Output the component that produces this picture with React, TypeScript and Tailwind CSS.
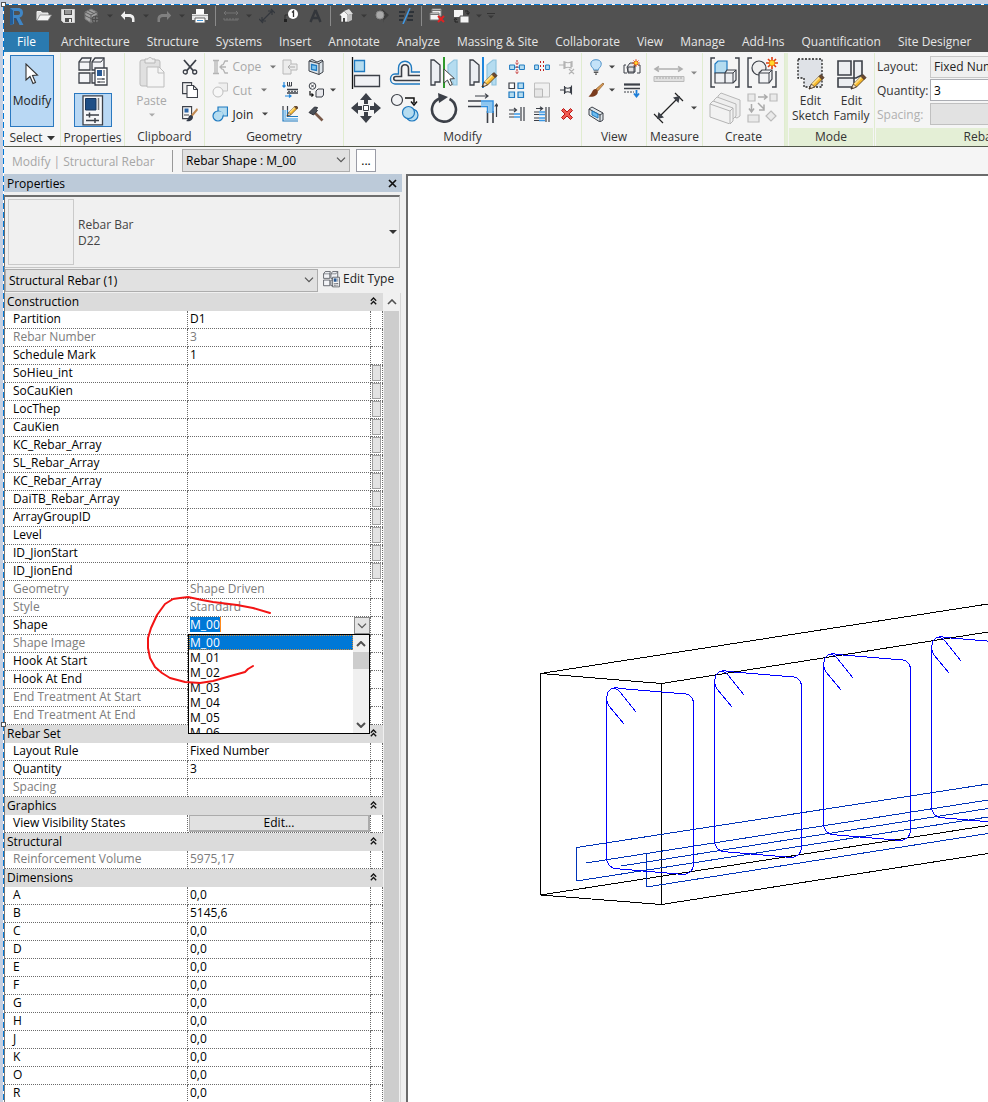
import type { ReactNode } from "react";

const INK = "#3c4048";
const BLUE = "#1f7ac0";
const SKY = "#b5dcf0";
const MUTE = "#b4b4b4";

function Icon({ w = 16, h = 16, children }: { w?: number; h?: number; children: ReactNode }) {
  return (
    <svg width={w} height={h} viewBox={`0 0 ${w} ${h}`} fill="none" className="block shrink-0" aria-hidden="true">
      {children}
    </svg>
  );
}

function Caret({ color = "#444" }: { color?: string }) {
  return (
    <Icon w={6} h={4}>
      <path d="M0 0.5h6L3 3.5z" fill={color} />
    </Icon>
  );
}

function Chevron() {
  return (
    <Icon w={10} h={6}>
      <path d="M1 0.7l4 4 4-4" stroke="#555" strokeWidth="1.2" />
    </Icon>
  );
}

function Pencil({ x, y }: { x: number; y: number }) {
  return (
    <g transform={`translate(${x} ${y})`}>
      <path d="M0 15l2.500-5 9-9 3 3-9 9z" fill="#f6b82c" stroke="#5a4020" strokeWidth="0.9" />
      <path d="M2.500 10l9-9 1.200 1.200-9 9z" fill="#ffe08a" />
      <path d="M10 2.500L12 0.500l3 3-2 2z" fill="#6b4a34" stroke="#3b2a20" strokeWidth="0.700" />
      <path d="M0 15l2.500-5 3 3z" fill="#f7e6cc" stroke="#3b2a20" strokeWidth="0.700" />
      <path d="M0 15l1-2 1 1z" fill="#222" />
    </g>
  );
}

function Burst({ x, y }: { x: number; y: number }) {
  return (
    <g transform={`translate(${x} ${y})`}>
      <path d="M0-6v12M-6 0h12M-4-4l8 8M4-4l-8 8" stroke="#e03a10" strokeWidth="1.600" />
      <circle r="2.800" fill="#ffd92e" stroke="#f08a10" />
    </g>
  );
}

function Logo() {
  return (
    <Icon w={15} h={19}>
      <path d="M1 1l8 0c4 0 5 2.500 5 5 0 2.300-1.300 4-3.500 4.500L14.500 18h-4L7 11H5l0 6-4 1z" fill="#3f86c6" />
      <path d="M1 1l3 2.500V17l-3 1z" fill="#235d98" />
      <path d="M5 4h4c1.500 0 2 1 2 2s-.6 2-2 2H5z" fill="#515151" />
      <path d="M5 11l2 0 3.500 7L8 15z" fill="#1f4f88" />
    </Icon>
  );
}

const quickIcons: Record<string, ReactNode> = {
  open: (
    <Icon w={16} h={12}>
      <path d="M1 10V1.500h4L6 3h6v2" fill="#ddd" stroke="#eee" />
      <path d="M1 10.500L4 5h11.500L12 10.500z" fill="#f4f4f4" stroke="#888" strokeWidth="0.800" />
    </Icon>
  ),
  save: (
    <Icon w={14} h={14}>
      <path d="M.5.5h13v13h-11l-2-2z" fill="#e8e8e8" stroke="#ccc" />
      <path d="M3 1h8v5H3zM4 9h7v4H4z" fill="#515151" />
      <path d="M4 2h6M4 4h6" stroke="#ddd" />
      <path d="M8 10h2v3H8z" fill="#eee" />
    </Icon>
  ),
  cube: (
    <Icon w={16} h={16}>
      <path d="M1 4l6-3 6 3v7l-6 4-6-4z" fill="#a0a0a0" stroke="#777" />
      <path d="M1 4l6 3 6-3M7 7v8M4 2.500l6 3M1 7.500l6 3 6-3" stroke="#5c5c5c" />
      <circle cx="11.500" cy="11.500" r="3.500" fill="#707070" stroke="#505050" />
      <path d="M11.500 8v7M8 11.500h7" stroke="#4c4c4c" />
    </Icon>
  ),
  undo: (
    <Icon w={16} h={13}>
      <path d="M5 1v3h4c4 0 5.500 2.500 5.500 5v3h-2.500V9.500C12 8 11 7 9 7H5v3L.8 5.500z" fill="#f0f0f0" />
    </Icon>
  ),
  redo: (
    <Icon w={16} h={13}>
      <path d="M11 1v3H7C3 4 1.500 6.500 1.500 9v3H4V9.500C4 8 5 7 7 7h4v3l4.200-4.500z" fill="#808080" />
    </Icon>
  ),
  print: (
    <Icon w={16} h={14}>
      <path d="M4 0h8v5H4z" fill="#fff" />
      <path d="M0 5h16v6H0z" fill="#e8e8e8" />
      <path d="M0 6.500h16" stroke="#aaa" />
      <path d="M3 9h10v5H3z" fill="#fff" stroke="#666" />
      <path d="M5 11.500h6" stroke="#3c94d8" />
    </Icon>
  ),
  ruler: (
    <Icon w={16} h={12}>
      <path d="M1 3h14M3 1L1 3l2 2M13 1l2 2-2 2M1 8v2h14V8M4 8v2M7 8v2M10 8v2M13 8v2" stroke="#747474" />
    </Icon>
  ),
  dim: (
    <Icon w={16} h={16}>
      <path d="M3 13L13 3M0 11l4 4M12 1l4 4M3 13l0-4M3 13l4 0M13 3H9M13 3v4" stroke="#33373d" strokeWidth="1.200" />
    </Icon>
  ),
  tag: (
    <Icon w={16} h={14}>
      <circle cx="10" cy="5" r="5" fill="#fff" />
      <path d="M9 3.500L10.500 2v6" stroke="#333" strokeWidth="1.300" />
      <path d="M5 6H2v5" stroke="#2c2c2c" />
      <path d="M1 10h3v3H1z" fill="#222" />
    </Icon>
  ),
  text: (
    <Icon w={13} h={14}>
      <path d="M6.500 1L1.500 13M6.500 1l5 12M3.500 9h6" stroke="#33363b" strokeWidth="2.400" />
    </Icon>
  ),
  house: (
    <Icon w={16} h={14}>
      <path d="M1 6l5-4 4 4v7H3V7z" fill="#f5f5f5" stroke="#444" strokeWidth="0.600" />
      <path d="M6 2l5-2 4 5-5 1z" fill="#ddd" />
      <path d="M10 6l4-1v6l-4 2z" fill="#bcbcbc" />
      <path d="M5 9h2v4H5z" fill="#444" />
    </Icon>
  ),
  section: (
    <Icon w={16} h={14}>
      <path d="M8 0l7 6-5 5v3z" fill="#3c3c3c" />
      <circle cx="6" cy="6" r="4" fill="#aaa" stroke="#888" />
    </Icon>
  ),
  thin: (
    <Icon w={17} h={16}>
      <path d="M1 4h6M1 8h5M1 12h4M11 4h5M10 8h5M9 12h6" stroke="#2d3238" strokeWidth="2" />
      <path d="M12 0L5 16" stroke="#3f9ae8" strokeWidth="1.500" />
    </Icon>
  ),
  closeWin: (
    <Icon w={18} h={16}>
      <path d="M4 1h9v7H4z" fill="#eee" stroke="#888" />
      <path d="M2 5h9v7H2z" fill="#f5f5f5" stroke="#777" />
      <path d="M2 6.500h9M4 2.500h9" stroke="#777" />
      <path d="M10 8l6 6M16 8l-6 6" stroke="#e02222" strokeWidth="2" />
    </Icon>
  ),
  switchWin: (
    <Icon w={17} h={16}>
      <path d="M1 2h9v7H1z" fill="#f4f4f4" />
      <path d="M7 8h9v7H7z" fill="#f4f4f4" stroke="#555" />
      <path d="M12 3h3v3M13 4.500L15 6.500 16.500 4.500M5 14H2v-3M1 12l1.500-2L4 12" stroke="#222" />
    </Icon>
  ),
};

type Quick = { name: string; icon?: string; kind?: "caret" | "sep" | "more" };
const quick: Quick[] = [
  { name: "Open", icon: "open" },
  { name: "Save", icon: "save" },
  { name: "Synchronize", icon: "cube" },
  { name: "Synchronize options", kind: "caret" },
  { name: "Undo", icon: "undo" },
  { name: "Undo history", kind: "caret" },
  { name: "Redo", icon: "redo" },
  { name: "Redo history", kind: "caret" },
  { name: "Print", icon: "print" },
  { name: "s1", kind: "sep" },
  { name: "Measure", icon: "ruler" },
  { name: "Measure options", kind: "caret" },
  { name: "Aligned dimension", icon: "dim" },
  { name: "Tag", icon: "tag" },
  { name: "Text", icon: "text" },
  { name: "s2", kind: "sep" },
  { name: "3D view", icon: "house" },
  { name: "3D view options", kind: "caret" },
  { name: "Section", icon: "section" },
  { name: "Thin lines", icon: "thin" },
  { name: "s3", kind: "sep" },
  { name: "Close hidden windows", icon: "closeWin" },
  { name: "Switch windows", icon: "switchWin" },
  { name: "Switch windows options", kind: "caret" },
  { name: "Customize toolbar", kind: "more" },
];

function QuickBar() {
  return (
    <div className="flex h-[27px] items-start pt-px">
      <button aria-label="Application menu" className="mr-1 flex h-5 w-6 items-center justify-center">
        <Logo />
      </button>
      {quick.map((q) => {
        if (q.kind === "sep")
          return (
            <div key={q.name} className="flex h-5 w-[7px] justify-center">
              <div className="w-px bg-[#8a8a8a]" />
            </div>
          );
        if (q.kind)
          return (
            <button key={q.name} aria-label={q.name} className="flex h-5 w-3 flex-col items-center justify-center gap-px">
              {q.kind === "more" && <span className="h-px w-2 bg-[#333]" />}
              <Caret color="#383838" />
            </button>
          );
        return (
          <button key={q.name} aria-label={q.name} className="flex h-5 w-6 items-center justify-center">
            {quickIcons[q.icon!]}
          </button>
        );
      })}
    </div>
  );
}

const tabs = [
  "Architecture", "Structure", "Systems", "Insert", "Annotate", "Analyze", "Massing & Site",
  "Collaborate", "View", "Manage", "Add-Ins", "Quantification", "Site Designer",
];

function Tabs() {
  return (
    <nav className="flex h-5 gap-[17px] whitespace-nowrap text-[12px] leading-5 text-[#e6e6e6]">
      <a href="#file" className="-mr-[5px] w-[45px] shrink-0 bg-[#2a7ab0] text-center text-white">File</a>
      {tabs.map((t) => (
        <a key={t} href="#tab" className="shrink-0">{t}</a>
      ))}
    </nav>
  );
}

function Panel({ title, className, tinted, caret, children }: {
  title: string; className: string; tinted?: boolean; caret?: boolean; children: ReactNode;
}) {
  return (
    <section className={`flex shrink-0 flex-col border-r border-[#e0ecd0] ${className}`}>
      <div className="flex h-[74px] justify-center pt-[2px]">{children}</div>
      <h2 className={`mt-[2px] flex h-[18px] items-center justify-center gap-1 text-[12px] text-[#333] ${tinted ? "mx-px bg-[#e4efd6]" : ""}`}>
        {title}
        {caret && (
          <Icon w={8} h={5}><path d="M0 0h8L4 4.500z" fill="#333" /></Icon>
        )}
      </h2>
    </section>
  );
}

function Tool({ label, className, children }: { label: string; className?: string; children: ReactNode }) {
  return (
    <button aria-label={label} className={`flex items-center justify-center ${className ?? ""}`}>
      {children}
    </button>
  );
}

function Building({ w = 30 }: { w?: number }) {
  return (
    <svg width={w} height={w} viewBox="0 0 30 30" fill="none" className="block shrink-0" aria-hidden="true">
      <path d="M1 5l3-4h9l-1 4v8H1zM14 5l3-4h9v12H14zM1 16h11v10H1zM14 16h9v10h-9z" fill="#f3f4f7" stroke={INK} strokeWidth="1.300" />
      <path d="M1 5h11M14 5h9l3-4" stroke={INK} strokeWidth="1" />
      <path d="M17 11h12v17H17z" fill="#fff" stroke={INK} strokeWidth="1.300" />
      <path d="M19 13h5v6h-5z" fill="#2a5a94" />
      <path d="M26 13v6M19 22h8M19 25h8M25 21v2M21 24v2" stroke={INK} />
    </svg>
  );
}

const G = {
  cursor: (
    <Icon w={14} h={22}>
      <path d="M1 1v16l4-3.500 3 7 2.500-1-3-7 5-.5z" fill="#fff" stroke="#333" strokeWidth="1.100" />
    </Icon>
  ),
  props: (
    <Icon w={22} h={31}>
      <path d="M1 .8h19.500v29H1z" fill="#f6f7f9" stroke={INK} strokeWidth="1.300" />
      <path d="M3.500 3.500h10.500v11.500H3.500z" fill="#1f4f86" stroke="#18365c" />
      <path d="M16.500 3v12" stroke="#777" strokeWidth="1.500" />
      <path d="M4 20h13M4 25.500h13M7.500 17.500v5M13 23v5" stroke={INK} strokeWidth="1.500" />
    </Icon>
  ),
  paste: (
    <Icon w={26} h={32}>
      <rect x="1" y="3" width="20" height="26" rx="2" fill="#e0e0e0" stroke="#bbb" />
      <path d="M6 2h3c0-2 4-2 4 0h3v4H6z" fill="#eee" stroke="#b8b8b8" />
      <path d="M8 10h12l5 5v15H8z" fill="#f5f5f5" stroke="#bdbdbd" />
      <path d="M19 10v6h6" stroke="#bdbdbd" />
    </Icon>
  ),
  cut: (
    <Icon>
      <path d="M2 1l9.500 11M14 1L4.500 12" stroke={INK} strokeWidth="1.800" />
      <circle cx="3.300" cy="13" r="2" stroke={INK} strokeWidth="1.300" />
      <circle cx="12.700" cy="13" r="2" stroke={INK} strokeWidth="1.300" />
    </Icon>
  ),
  copy: (
    <Icon>
      <path d="M.6.600h9v11h-9z" fill="#eee" stroke={INK} strokeWidth="1.100" />
      <path d="M5 3.500h6.500l4 4v8H5z" fill="#fff" stroke={INK} strokeWidth="1.100" />
      <path d="M11.500 3.500v4h4" stroke={INK} />
    </Icon>
  ),
  match: (
    <Icon>
      <path d="M.6.600h9v12h-9z" fill="#f8f8f8" stroke={INK} strokeWidth="1.100" />
      <path d="M2.500 2.500h4v4h-4z" fill="#2c66a8" />
      <path d="M2 9h5" stroke={INK} />
      <path d="M15 2L9 9l1.500 1.500L16 4z" fill="#c08850" />
      <path d="M9 9c-3 0-2 4-5 6 4 1 7-1 7-4.500z" fill="#333b4a" />
    </Icon>
  ),
  cope: (
    <Icon>
      <path d="M1 1.500h6M1 14.500h6M3 2v12M5 2v12M16 2h-3l-2 4M16 14h-3l-2-4M14 8H8M10.500 5.500L8 8l2.500 2.500" stroke={MUTE} strokeWidth="1.300" />
    </Icon>
  ),
  cutG: (
    <Icon>
      <path d="M6.500 1h9v8H11" fill="#eee" stroke="#c4c4c4" />
      <circle cx="6" cy="10" r="5" fill="#f7f7f7" stroke="#c0c0c0" />
    </Icon>
  ),
  join: (
    <Icon>
      <path d="M6 1h9.500v9H6z" fill={SKY} stroke={BLUE} strokeWidth="1.200" />
      <circle cx="6" cy="10" r="5" fill={SKY} stroke={BLUE} strokeWidth="1.200" />
      <path d="M6.500 5.500h3.500a5 5 0 0 1 1 4H6.500z" fill={SKY} />
    </Icon>
  ),
  joinRoof: (
    <Icon>
      <path d="M1 1h8v4h6v6H9v4H1z" fill="#ececec" stroke="#b8b8b8" />
      <path d="M13 8H6M8.500 5.500L6 8l2.500 2.500" stroke="#aaa" />
    </Icon>
  ),
  cope3d: (
    <Icon>
      <path d="M1 2l3-1.500L9 3l5-2 1 1v11l-4 2.500L1 12z" fill="#dce4ea" stroke={INK} />
      <path d="M1 2l10 2.500 4-2.500M11 4.500v11" stroke={INK} />
      <path d="M3.500 5.500l5 1v5l-5-1z" fill="#7cc4ee" stroke={BLUE} strokeWidth="1.300" />
    </Icon>
  ),
  split: (
    <Icon>
      <path d="M2 0v5M.5 3.500L2 5.200 3.500 3.500M3 14h6M7 12.500L9 14l-2 1.500" stroke="#1f86dc" strokeWidth="1.200" />
      <path d="M5.500 0v4h4V0M7.500 0v4" stroke={INK} />
      <path d="M5 7.500h11M5 11h11" stroke={INK} strokeWidth="1.300" />
      <path d="M6 9.300h10" stroke={INK} strokeDasharray="2 1" />
    </Icon>
  ),
  demolishBox: (
    <Icon>
      <circle cx="4.500" cy="4" r="3.300" fill="#fff" stroke={INK} />
      <path d="M3 2.500l3 3M6 2.500l-3 3" stroke={INK} />
      <path d="M8 9l2-2h5.500v6L14 15H8z" fill="#e8e8ec" stroke={INK} />
      <path d="M2 9v4h3M3.500 11.500L5.200 13l-1.700 1.700" stroke="#111" strokeWidth="1.200" />
    </Icon>
  ),
  wallJoin: (
    <Icon>
      <path d="M1 4v11h15M5.500 4v6.500H16" stroke={BLUE} strokeWidth="1.200" />
      <path d="M3.200 4v9H16" stroke="#8cc6f0" strokeWidth="2" />
      <path d="M1 0v4M5.500 0v4" stroke={INK} strokeWidth="1.200" />
      <g transform="translate(5 -1) scale(.74)"><Pencil x={0} y={0} /></g>
    </Icon>
  ),
  hammer: (
    <Icon>
      <path d="M6 6l8.500 8.500" stroke="#7a5a4a" strokeWidth="2.600" />
      <path d="M1 6.500L6.500 1l3 .5-1 2 1 1-4 4.500z" fill="#4b4f57" stroke="#2e3138" />
    </Icon>
  ),
  align: (
    <Icon w={30} h={32}>
      <path d="M1.500 0v32" stroke="#111" strokeWidth="1.300" />
      <path d="M3.500 3.500h10v11h-10z" fill={SKY} stroke={BLUE} strokeWidth="1.300" />
      <path d="M3.500 18.500h25v11h-25z" fill="#f0f1f4" stroke={INK} strokeWidth="1.300" />
    </Icon>
  ),
  offset: (
    <Icon w={32} h={28}>
      <path d="M31 25H6c-6 0-6-10 0-10h3.500V9c0-9 13-9 13 0v4H31" stroke={BLUE} strokeWidth="1.400" />
      <path d="M31 21.500H7c-3 0-3-4 0-4h5.500V9.500c0-5 7-5 7 0v7H31" stroke={INK} strokeWidth="1.600" />
    </Icon>
  ),
  mirrorPick: (
    <Icon w={30} h={31}>
      <path d="M2 3l3 0 6 5v17H6v3H2z" fill="#eceef2" stroke={INK} strokeWidth="1.300" />
      <path d="M28 3h-3l-6 5v17h5v3h4z" fill={SKY} stroke="#8fc4de" strokeWidth="1.200" />
      <path d="M15 0v31" stroke="#2f9a2c" strokeWidth="2" />
      <path d="M15 12v14l3.500-3 2.500 5.500 2.300-1-2.400-5.500 4.500-.4z" fill="#fff" stroke="#444" />
    </Icon>
  ),
  mirrorDraw: (
    <Icon w={30} h={31}>
      <path d="M2 3l3 0 6 5v17H6v3H2z" fill="#eceef2" stroke={INK} strokeWidth="1.300" />
      <path d="M28 3h-3l-6 5v17h5v3h4z" fill={SKY} stroke="#8fc4de" strokeWidth="1.200" />
      <path d="M15 0v31" stroke="#1f86dc" strokeWidth="2" />
      <Pencil x={14} y={15} />
    </Icon>
  ),
  move: (
    <Icon w={30} h={30}>
      <path d="M15 0l6 7h-4v4h-4V7H9zM15 30l-6-7h4v-4h4v4h4zM0 15l7-6v4h4v4H7v4zM30 15l-7 6v-4h-4v-4h4V9z" fill={INK} />
      <path d="M12.500 12.500h5v5h-5z" fill="#fff" stroke={INK} />
    </Icon>
  ),
  copyEl: (
    <Icon w={30} h={30}>
      <circle cx="7" cy="7" r="5.500" fill="#f2f3f5" stroke={INK} strokeWidth="1.200" />
      <path d="M15 5h9v5M21 8.500L24 12l3-3.500" stroke="#111" strokeWidth="1.500" />
      <circle cx="22" cy="22" r="6" fill={SKY} stroke={BLUE} strokeWidth="1.200" />
      <circle cx="18.500" cy="19.500" r="6" fill={SKY} stroke={BLUE} strokeWidth="1.200" />
    </Icon>
  ),
  rotate: (
    <Icon w={30} h={30}>
      <path d="M20.500 6a12 12 0 1 1-10-.5" stroke={INK} strokeWidth="2.600" />
      <path d="M9 0l10 4-9 6z" fill={INK} />
    </Icon>
  ),
  trim: (
    <Icon w={30} h={31}>
      <path d="M0 8h13M0 13.500h13M19.500 18v12M25 18v12" stroke={INK} strokeWidth="1.600" />
      <path d="M13 10.500h9.500V20" stroke="#8cc6f0" strokeWidth="4" />
      <path d="M13 8h12v12M13 13.500h6.500V20" stroke="#2f8fe0" strokeWidth="1.500" />
      <path d="M7 3h13M17 .6L20 3l-3 2.400M28.500 24V11M26.800 13.500L28.500 11l1.500 2.500" stroke={INK} strokeWidth="1.200" />
    </Icon>
  ),
  splitEl: (
    <Icon>
      <path d="M.6 6h5v4.500h-5zM10.400 6h5v4.500h-5z" fill={SKY} stroke={BLUE} />
      <path d="M5 8.200h6" stroke={BLUE} />
      <path d="M8 1v14" stroke="#c02020" strokeDasharray="2 1" />
      <path d="M6.500 4h3M6.500 13h3" stroke="#c02020" strokeDasharray="1 1" />
    </Icon>
  ),
  splitGap: (
    <Icon>
      <path d="M.6 6h3.800v4.500H.6zM11.600 6h3.800v4.500h-3.800z" fill={SKY} stroke={BLUE} />
      <path d="M6.500 2v12M9.500 2v12" stroke="#c02020" strokeDasharray="2 2" />
    </Icon>
  ),
  unpin: (
    <Icon>
      <path d="M0 6h5M5 2v8M6 3c2 1 4 1 6 0v6c-2-1-4-1-6 0zM13 2v6M10 10l5 5M15 10l-5 5" stroke={MUTE} strokeWidth="1.200" />
    </Icon>
  ),
  array: (
    <Icon w={17} h={17}>
      <path d="M1 1h5.500v5.500H1z" fill="#fff" stroke={INK} strokeWidth="1.200" />
      <path d="M10 1h5.500v5.500H10zM1 10h5.500v5.500H1zM10 10h5.500v5.500H10z" fill={SKY} stroke={BLUE} strokeWidth="1.200" />
    </Icon>
  ),
  scale: (
    <Icon>
      <path d="M.5 1h15v14H.5z" fill="#f0f0f0" stroke="#c0c0c0" />
      <path d="M.5 7h8v8h-8z" fill="#e6e6e6" stroke="#b8b8b8" />
    </Icon>
  ),
  pin: (
    <Icon w={14}>
      <path d="M0 8h4M4.500 4v8M5 5.500c2 1 3.500 1 5.500 0v5c-2-1-3.500-1-5.500 0zM11.500 3.500v9" stroke={INK} strokeWidth="1.100" />
    </Icon>
  ),
  trimOne: (
    <Icon>
      <path d="M0 4h7M5 2l2.500 2L5 6M12 1v14M15 1v14M0 8h5M0 11h5" stroke={INK} strokeWidth="1.200" />
      <path d="M5 8h6M5 11h6" stroke="#3a98e6" strokeWidth="1.500" />
    </Icon>
  ),
  trimMany: (
    <Icon>
      <path d="M2 2.500h6M6 .8l2.500 1.700L6 4.500M12 1v15M15 1v15M0 6h5M0 8.500h5M0 12h5M0 14.500h5" stroke={INK} strokeWidth="1.200" />
      <path d="M5 6h6M5 8.500h6M5 12h6M5 14.500h6" stroke="#3a98e6" strokeWidth="1.300" />
    </Icon>
  ),
  del: (
    <Icon w={14} h={14}>
      <path d="M1.500 3.500l2-2L7 5l3.500-3.500 2 2L9 7l3.500 3.500-2 2L7 9l-3.500 3.500-2-2L5 7z" fill="#f05a50" stroke="#b81818" />
    </Icon>
  ),
  bulb: (
    <Icon>
      <path d="M8 .7c6.500 0 6 6 3.500 8-1 1-1 1.600-1 2.300h-5c0-.7 0-1.300-1-2.300C2 6.700 1.500.700 8 .700z" fill="#c4e2f8" stroke="#4c90c8" />
      <path d="M5.800 12h4.500M5.800 13.500h4.500M7 15.200h2" stroke="#555" strokeWidth="1.200" />
    </Icon>
  ),
  brush: (
    <Icon>
      <path d="M15 1L8 7l1.800 2L16 2z" fill="#d89850" stroke="#8a5a2a" strokeWidth="0.700" />
      <path d="M8 7c-4-.5-3 4-7.500 7.500C5 15.500 10.500 13.500 9.800 9z" fill="#7a3c1e" />
    </Icon>
  ),
  viewCube: (
    <Icon>
      <path d="M1 3l3-2 11 6v7l-3 2L1 9z" fill="#e0e6ea" stroke={INK} />
      <path d="M1 3l11 6 3-2M12 9v7" stroke={INK} />
      <path d="M4 5l6 3v4L4 9z" fill="#70bdf0" stroke={BLUE} />
    </Icon>
  ),
  assembly: (
    <Icon w={18} h={16}>
      <path d="M3 6H1v8h3M15 6h2v8h-3" stroke={INK} />
      <path d="M4 8l3-4 5 0v9H5z" fill="#e2e2e4" stroke={INK} />
      <path d="M5 8h7M5 8v6h6V8l2-3" stroke={INK} />
      <g transform="translate(13 4) scale(.62)"><Burst x={0} y={0} /></g>
    </Icon>
  ),
  linework: (
    <Icon>
      <path d="M0 2.500h16" stroke={INK} strokeWidth="2.200" />
      <path d="M0 6.500h16" stroke={INK} strokeWidth="1.500" />
      <path d="M0 10h10" stroke={INK} strokeDasharray="2 1" />
      <path d="M12.500 8v6M10 11.500l2.500 3 2.500-3" stroke="#1f7fd8" strokeWidth="1.800" />
    </Icon>
  ),
  measure: (
    <Icon w={32} h={20}>
      <path d="M2 6h27M6 3.500L2 6l4 2.500M25 3.500L29 6l-4 2.500" stroke="#b0b0b0" strokeWidth="1.500" />
      <path d="M1 13.500h30v5H1z" fill="#e0e0e0" stroke="#bbb" />
      <path d="M4 14v2M7 14v2M10 14v2M13 14v2M16 14v2M19 14v2M22 14v2M25 14v2M28 14v2" stroke="#aaa" />
    </Icon>
  ),
  aligned: (
    <Icon w={32} h={32}>
      <path d="M5 26L26 5M1 22l9 9M22 1l8 8" stroke="#222" strokeWidth="1.200" />
      <path d="M4 27l1.500-7 5.500 5.500zM27 4l-7 1.500 5.500 5.500z" fill={INK} />
    </Icon>
  ),
  createGroup: (
    <Icon w={32} h={32}>
      <path d="M6 1H2v29h4M26 1h4v29h-4" stroke={INK} strokeWidth="1.400" />
      <path d="M6 7l3-3h9v9l-2 3H6z" fill={SKY} stroke={BLUE} strokeWidth="1.200" />
      <path d="M6 16h10v10H6zM16 16l2-3h9v10l-3 3h-8z" fill="#eef0f3" stroke={INK} strokeWidth="1.200" />
      <path d="M16 16h8l3-3M24 16v10" stroke={INK} />
    </Icon>
  ),
  similar: (
    <Icon w={34} h={32}>
      <path d="M6 1H2v29h4M26 30h4V14" stroke={INK} strokeWidth="1.400" />
      <circle cx="13" cy="11" r="7" fill="#eee" stroke={INK} strokeWidth="1.200" />
      <path d="M13 16l3-3h10v9l-3 4H13z" fill="#f1f2f4" stroke={INK} strokeWidth="1.200" />
      <path d="M13 16h10v10M23 16l3-3" stroke={INK} />
      <Burst x={26} y={6} />
    </Icon>
  ),
  parts: (
    <Icon w={32} h={32}>
      <path d="M9 4l3-3 19 7v16l-3 2-19-7z" fill="#ededed" stroke="#b8b8b8" />
      <path d="M5 8l3-3 19 7v12l-3 3-19-7z" fill="#efefef" stroke="#b8b8b8" />
      <path d="M1 12l3-3 20 7v13l-3 3-20-7z" fill="#f2f2f2" stroke="#b4b4b4" />
      <path d="M1 12l20 7v12M21 19l3-3" stroke="#b4b4b4" />
    </Icon>
  ),
  flow: (
    <Icon w={32} h={32}>
      <path d="M1 2h7v7H1zM23 2h7v7h-7zM1 23h11v7H1zM24 19l5 5-5 5-5-5z" fill="#eaeaea" stroke="#bbb" strokeWidth="1.200" />
      <path d="M11 5h8M17 2.500L20 5l-3 2.500M4.500 12v7M2 16.500L4.500 20 7 16.500M11 11l6 6M17 12.500V18h-5" stroke="#aaa" strokeWidth="1.500" />
    </Icon>
  ),
  sketch: (
    <Icon w={28} h={32}>
      <path d="M1 1h24v28H7v-9H1z" fill="#dfe2e7" stroke="#222" strokeWidth="1.300" strokeDasharray="2 1.500" />
      <Pencil x={12} y={16} />
    </Icon>
  ),
  family: (
    <Icon w={30} h={32}>
      <path d="M1 3h13v14H1zM17 3h8v14l-6 3h-2zM1 20h16v9H1z" fill="#eceef1" stroke={INK} strokeWidth="1.600" />
      <Pencil x={14} y={16} />
    </Icon>
  ),
};

function TextTool({ icon, label, muted }: { icon: ReactNode; label: string; muted?: boolean }) {
  return (
    <button className={`flex items-center gap-[5px] text-[12px] leading-4 ${muted ? "text-[#a8a8a8]" : "text-[#222]"}`}>
      {icon}
      <span className="pt-px">{label}</span>
      <span className="ml-1"><Caret color={muted ? "#777" : "#444"} /></span>
    </button>
  );
}

function BigTool({ icon, lines }: { icon: ReactNode; lines: string[] }) {
  return (
    <button className="flex w-[41px] flex-col items-center text-[12px] leading-[15px] text-[#333]">
      <span className="flex h-[38px] items-center">{icon}</span>
      {lines.map((l) => <span key={l}>{l}</span>)}
    </button>
  );
}

function Ribbon() {
  return (
    <div className="flex h-[95px] overflow-hidden border-b border-[#53584c] bg-[#f5f5f5] pt-px whitespace-nowrap">
      <Panel title="Select" caret className="w-[57px]">
        <button className="flex h-[72px] w-11 flex-col items-center gap-2 border border-[#2a78c0] bg-[#b9d8f4] pt-[7px] text-[12px] text-[#222]">
          {G.cursor}
          <span className="leading-4">Modify</span>
        </button>
      </Panel>
      <Panel title="Properties" className="w-16">
        <div className="flex flex-col items-center gap-1">
          <Tool label="Type properties" className="h-[34px]"><Building /></Tool>
          <Tool label="Properties" className="h-[34px] w-[38px] border border-[#2a78c0] bg-[#b9d8f4]">{G.props}</Tool>
        </div>
      </Panel>
      <Panel title="Clipboard" className="w-20">
        <div className="grid grid-cols-[48px_28px] pl-[2px]">
          <button className="flex flex-col items-center gap-1 pt-[2px] text-[12px] leading-4 text-[#a8a8a8]">
            {G.paste}
            <span>Paste</span>
            <Caret color="#aaa" />
          </button>
          <div className="grid grid-rows-3">
            <Tool label="Cut to clipboard">{G.cut}</Tool>
            <Tool label="Copy to clipboard">{G.copy}</Tool>
            <Tool label="Match type">{G.match}</Tool>
          </div>
        </div>
      </Panel>
      <Panel title="Geometry" className="w-[139px]">
        <div className="grid grid-cols-[65px_26px_26px_8px] grid-rows-3">
          <TextTool icon={G.cope} label="Cope" muted />
          <Tool label="Join roof">{G.joinRoof}</Tool>
          <Tool label="Wall opening">{G.cope3d}</Tool>
          <span />
          <TextTool icon={G.cutG} label="Cut" muted />
          <Tool label="Beam joins">{G.split}</Tool>
          <Tool label="Split face">{G.demolishBox}</Tool>
          <Tool label="Split face options"><Caret /></Tool>
          <TextTool icon={G.join} label="Join" />
          <Tool label="Wall joins">{G.wallJoin}</Tool>
          <Tool label="Demolish">{G.hammer}</Tool>
        </div>
      </Panel>
      <Panel title="Modify" className="w-[238px]">
        <div className="grid grid-cols-[39px_39px_39px_39px] grid-rows-2">
          <Tool label="Align">{G.align}</Tool>
          <Tool label="Offset">{G.offset}</Tool>
          <Tool label="Mirror, pick axis">{G.mirrorPick}</Tool>
          <Tool label="Mirror, draw axis">{G.mirrorDraw}</Tool>
          <Tool label="Move">{G.move}</Tool>
          <Tool label="Copy">{G.copyEl}</Tool>
          <Tool label="Rotate">{G.rotate}</Tool>
          <Tool label="Trim to corner">{G.trim}</Tool>
        </div>
        <div className="grid grid-cols-[25px_25px_25px] grid-rows-3 pl-[2px]">
          <Tool label="Split element">{G.splitEl}</Tool>
          <Tool label="Split with gap">{G.splitGap}</Tool>
          <Tool label="Unpin">{G.unpin}</Tool>
          <Tool label="Array">{G.array}</Tool>
          <Tool label="Scale">{G.scale}</Tool>
          <Tool label="Pin">{G.pin}</Tool>
          <Tool label="Trim single element">{G.trimOne}</Tool>
          <Tool label="Trim multiple elements">{G.trimMany}</Tool>
          <Tool label="Delete">{G.del}</Tool>
        </div>
      </Panel>
      <Panel title="View" className="w-[65px]">
        <div className="grid grid-cols-[20px_12px_28px] grid-rows-3 pl-1">
          <Tool label="Hide in view">{G.bulb}</Tool>
          <Tool label="Hide options"><Caret /></Tool>
          <Tool label="Displace">{G.assembly}</Tool>
          <Tool label="Override graphics">{G.brush}</Tool>
          <Tool label="Override options"><Caret /></Tool>
          <Tool label="Linework">{G.linework}</Tool>
          <Tool label="Selection box">{G.viewCube}</Tool>
        </div>
      </Panel>
      <Panel title="Measure" className="w-14">
        <div className="grid grid-cols-[38px_12px] grid-rows-2">
          <Tool label="Measure distance">{G.measure}</Tool>
          <Tool label="Measure distance options"><Caret color="#888" /></Tool>
          <Tool label="Aligned dimension">{G.aligned}</Tool>
          <Tool label="Dimension options"><Caret /></Tool>
        </div>
      </Panel>
      <Panel title="Create" className="w-[82px]">
        <div className="grid grid-cols-[38px_38px] grid-rows-2">
          <Tool label="Create group">{G.createGroup}</Tool>
          <Tool label="Create similar">{G.similar}</Tool>
          <Tool label="Create parts">{G.parts}</Tool>
          <Tool label="Create assembly">{G.flow}</Tool>
        </div>
      </Panel>
      <div className="w-[3px] shrink-0 bg-[#e4efd6]" />
      <Panel title="Mode" tinted className="w-[87px]">
        <BigTool icon={G.sketch} lines={["Edit", "Sketch"]} />
        <BigTool icon={G.family} lines={["Edit", "Family"]} />
      </Panel>
      <Panel title="Rebar Set" tinted className="w-[232px]">
        <div className="grid w-full grid-cols-[53px_1fr] grid-rows-3 items-center pl-[2px] text-[12px] text-[#333]">
          <label htmlFor="layout" className="pt-px">Layout:</label>
          <select id="layout" className="h-[22px] appearance-none border border-[#c8c8c8] bg-[#f0f0f0] px-[3px] text-[#222]">
            <option>Fixed Number</option>
          </select>
          <label htmlFor="quantity" className="pt-px">Quantity:</label>
          <input id="quantity" defaultValue="3" className="h-[22px] min-w-0 border border-[#abadb3] bg-white px-[3px] text-black" />
          <label htmlFor="spacing" className="pt-px text-[#b0b0b0]">Spacing:</label>
          <input id="spacing" disabled className="h-[22px] min-w-0 border border-[#c0c0c0] bg-[#e2e2e2] px-[3px]" />
        </div>
      </Panel>
    </div>
  );
}

function OptionsBar() {
  return (
    <div className="flex h-[27px] items-center bg-[#f5f5f5] text-[12px]">
      <span className="w-[168px] pt-[2px] pl-2 text-[#a6a6a6]">Modify | Structural Rebar</span>
      <div className="mr-[9px] h-[22px] w-px bg-[#999]" />
      <div className="relative">
        <select aria-label="Rebar shape" className="block h-[23px] w-[168px] appearance-none border border-[#adadad] bg-[#e1e1e1] px-[3px] text-black">
          <option>Rebar Shape : M_00</option>
        </select>
        <span className="pointer-events-none absolute top-2 right-1"><Chevron /></span>
      </div>
      <button aria-label="Rebar shape browser" className="ml-[6px] h-[23px] w-5 border border-[#9a9ca6] bg-white leading-4">...</button>
    </div>
  );
}

type Row = { label: string; value?: string; muted?: boolean; assoc?: boolean; kind?: "shape" | "edit" };
const groups: { title: string; rows: Row[] }[] = [
  {
    title: "Construction",
    rows: [
      { label: "Partition", value: "D1" },
      { label: "Rebar Number", value: "3", muted: true },
      { label: "Schedule Mark", value: "1" },
      { label: "SoHieu_int", assoc: true },
      { label: "SoCauKien", assoc: true },
      { label: "LocThep", assoc: true },
      { label: "CauKien", assoc: true },
      { label: "KC_Rebar_Array", assoc: true },
      { label: "SL_Rebar_Array", assoc: true },
      { label: "KC_Rebar_Array", assoc: true },
      { label: "DaiTB_Rebar_Array", assoc: true },
      { label: "ArrayGroupID", assoc: true },
      { label: "Level", assoc: true },
      { label: "ID_JionStart", assoc: true },
      { label: "ID_JionEnd", assoc: true },
      { label: "Geometry", value: "Shape Driven", muted: true },
      { label: "Style", value: "Standard", muted: true },
      { label: "Shape", kind: "shape" },
      { label: "Shape Image", muted: true },
      { label: "Hook At Start" },
      { label: "Hook At End" },
      { label: "End Treatment At Start", muted: true },
      { label: "End Treatment At End", muted: true },
    ],
  },
  {
    title: "Rebar Set",
    rows: [
      { label: "Layout Rule", value: "Fixed Number" },
      { label: "Quantity", value: "3" },
      { label: "Spacing", muted: true },
    ],
  },
  { title: "Graphics", rows: [{ label: "View Visibility States", kind: "edit" }] },
  { title: "Structural", rows: [{ label: "Reinforcement Volume", value: "5975,17", muted: true }] },
  {
    title: "Dimensions",
    rows: ["A", "B", "C", "D", "E", "F", "G", "H", "J", "K", "O", "R"].map((label) => ({
      label,
      value: label === "B" ? "5145,6" : "0,0",
    })),
  },
];

function ShapeCell() {
  return (
    <div className="relative flex h-[17px] items-start justify-between pl-[2px]">
      <span className="border-r border-[#ff8a1c] bg-[#0078d7] leading-[15px] text-white">M_00</span>
      <button aria-label="Open shape list" className="flex h-[17px] w-4 items-center justify-center border border-[#8a8a8a] bg-[#e4e4e4]">
        <Chevron />
      </button>
      <div className="absolute top-[17px] left-0 z-10 flex h-[100px] w-[182px] overflow-hidden border border-black bg-white">
        <ul role="listbox" aria-label="Shape" className="flex-1">
          {["M_00", "M_01", "M_02", "M_03", "M_04", "M_05", "M_06"].map((s, i) => (
            <li key={s} role="option" aria-selected={i === 0}
              className={`h-[15px] px-px leading-[15px] ${i === 0 ? "bg-[#0078d7] text-white outline-1 -outline-offset-1 outline-dotted outline-[#d08a3a]" : ""}`}>
              {s}
            </li>
          ))}
        </ul>
        <div className="flex w-4 flex-col items-center bg-[#f0f0f0]">
          <span className="flex h-[17px] items-center">
            <Icon w={10} h={6}><path d="M1 5l4-4 4 4" stroke="#505050" strokeWidth="2" /></Icon>
          </span>
          <span className="h-[17px] w-full bg-[#cdcdcd]" />
          <span className="mt-auto flex h-[17px] items-center">
            <Icon w={10} h={6}><path d="M1 1l4 4 4-4" stroke="#505050" strokeWidth="2" /></Icon>
          </span>
        </div>
      </div>
    </div>
  );
}

function PropertyTable() {
  const dots = "h-[18px] border-b border-dotted border-[#6a6a6a] p-0 align-top";
  return (
    <table className="w-[378px] shrink-0 table-fixed border-separate border-spacing-0 bg-white text-[12px] leading-[15px] text-black">
      <colgroup>
        <col className="w-[183px]" />
        <col className="w-[183px]" />
        <col className="w-3" />
      </colgroup>
      {groups.map((g) => (
        <tbody key={g.title}>
          <tr>
            <th colSpan={3} className="h-[18px] bg-[#dbdbdb] p-0 text-left font-normal">
              <div className="flex h-[18px] items-center justify-between pr-[6px] pb-[2px] pl-[2px]">
                {g.title}
                <button aria-label={`Collapse ${g.title}`}>
                  <Icon w={7} h={8}><path d="M.8 3.700L3.500 1l2.700 2.700M.8 7.200L3.500 4.500l2.700 2.700" stroke="#111" strokeWidth="1.300" /></Icon>
                </button>
              </div>
            </th>
          </tr>
          {g.rows.map((r, i) => (
            <tr key={i} className={r.muted ? "text-[#7c7c7c]" : ""}>
              <td className={`${dots} border-r pl-2`}>{r.label}</td>
              <td className={`${dots} border-r`}>
                {r.kind === "shape" ? <ShapeCell /> : r.kind === "edit" ? (
                  <button className="mx-px block h-[17px] w-[181px] border border-r-2 border-b-2 border-[#ababab] bg-[#e1e1e1] leading-[14px]">Edit...</button>
                ) : (
                  <span className="block pl-[2px]">{r.value}</span>
                )}
              </td>
              <td className={`${dots} border-r`}>
                {r.assoc && <button aria-label={`Associate ${r.label}`} className="mx-px block h-4 w-[9px] border border-[#a0a0a0] bg-[#e3e3e3]" />}
              </td>
            </tr>
          ))}
        </tbody>
      ))}
    </table>
  );
}

function PropertiesPanel() {
  return (
    <aside className="relative flex w-[398px] shrink-0 flex-col bg-[#f0f0f0] text-[12px]">
      <header className="flex h-[18px] items-center justify-between bg-[#bccad9] pr-[5px] pl-[3px] text-black">
        <span className="pt-[2px] leading-4">Properties</span>
        <button aria-label="Close">
          <Icon w={9} h={9}><path d="M1 1l7 7M8 1L1 8" stroke="#111" strokeWidth="1.700" /></Icon>
        </button>
      </header>
      <div className="mt-[3px] mr-[2px] flex h-[73px] items-center justify-between border border-t-2 border-[#c6c6c6] border-t-[#6e6e6e] border-l-[#6e6e6e] pr-[2px] pl-[3px] text-[#444]">
        <div className="flex items-center gap-1">
          <div className="h-[66px] w-[66px] border border-[#cacaca]" />
          <div className="pt-px leading-4">
            <p>Rebar Bar</p>
            <p>D22</p>
          </div>
        </div>
        <button aria-label="Change type"><Icon w={8} h={4}><path d="M0 0h8L4 4z" fill="#333" /></Icon></button>
      </div>
      <div className="flex h-[25px] items-start border-l border-[#8a8a8a]">
        <div className="relative mt-px">
          <select aria-label="Category filter" className="block h-[23px] w-[313px] appearance-none border border-[#adadad] bg-[#e1e1e1] px-[3px] text-black">
            <option>Structural Rebar (1)</option>
          </select>
          <span className="pointer-events-none absolute top-2 right-1"><Chevron /></span>
        </div>
        <button className="ml-[5px] flex h-[22px] items-center gap-[3px] text-[#222]">
          <Building w={17} />
          Edit Type
        </button>
      </div>
      <div className="flex border-l border-[#777]">
        <PropertyTable />
        <div className="ml-px flex w-[15px] flex-col bg-[#cdcdcd]">
          <button aria-label="Scroll up" className="flex h-[18px] items-center justify-center bg-[#f0f0f0]">
            <Icon w={10} h={6}><path d="M1 5l4-4 4 4" stroke="#505050" strokeWidth="1.600" /></Icon>
          </button>
        </div>
        <div className="ml-px w-px bg-[#d8d8d8]" />
      </div>
      <svg width="130" height="96" viewBox="143 591 130 96" fill="none" aria-hidden="true" className="pointer-events-none absolute top-[417px] left-[139px] z-20">
        <path d="M270 613L253 608 237 605 213 602 202 600 188 597 180 598 173 599 165 604 157 615 151 628 148 638 148 648 150 658 155 667 162 673 170 678 185 682 200 683 213 681 227 677 245 672 248 669 253 666" stroke="#f31414" strokeWidth="2" strokeLinecap="round" strokeLinejoin="round" />
      </svg>
    </aside>
  );
}

const stirrups = [[0, 0], [108, -17], [217, -34], [325, -51]];

function ModelView() {
  return (
    <main className="ml-1 flex-1 overflow-hidden border-t-2 border-l-2 border-[#6b6b6b] bg-white">
      <svg width="580" height="926" viewBox="408 176 580 926" fill="none" shapeRendering="crispEdges" className="block" role="img" aria-label="Beam with rebar in 3D">
        <path d="M540.500 673.500V895L661.500 904.500V683.500L540.500 673.500L988 604M661.500 683.500L988 632M540.500 895L988 825.500M661.500 904.500L988 853.500" stroke="#000" />
        <path d="M988 784L576.500 847.500V881L988 817M586 863L988 800M621 866L988 808.500M646.500 853V887L988 833.500" stroke="#0033b8" />
        {stirrups.map(([x, y]) => (
          <path key={x} transform={`translate(${x} ${y})`} stroke="#00f"
            d="M606.500 700V859Q608 866 614 868.500L684 874.500Q692 873 693.500 866V702Q692 695 686 694L620 688.500Q611 686 607.500 693L606.500 700L609 706 624 724M612 688.500Q617 688 620 692L636 712" />
        ))}
      </svg>
    </main>
  );
}

export default function App() {
  return (
    <div className="relative flex min-h-screen flex-col overflow-hidden bg-[#c6d0e2] pt-1 pl-[3px] font-['Open_Sans','Noto_Sans',sans-serif]">
      <div className="h-px shrink-0 bg-[repeating-linear-gradient(90deg,#0078d7_0_6px,#fff_6px_9px)]" />
      <div className="flex flex-1">
        <div className="w-px shrink-0 bg-[repeating-linear-gradient(180deg,#0078d7_0_6px,#fff_6px_9px)]" />
        <div className="flex min-w-0 flex-1 flex-col bg-[#f0f0f0]">
          <header className="bg-[#515151]">
            <QuickBar />
            <Tabs />
          </header>
          <Ribbon />
          <OptionsBar />
          <div className="flex flex-1">
            <PropertiesPanel />
            <ModelView />
          </div>
        </div>
      </div>
      <span className="absolute top-[2px] left-px h-[5px] w-[5px] border border-[#555] bg-white" />
      <span className="absolute top-[722px] left-px h-[5px] w-[5px] border border-[#555] bg-white" />
    </div>
  );
}
